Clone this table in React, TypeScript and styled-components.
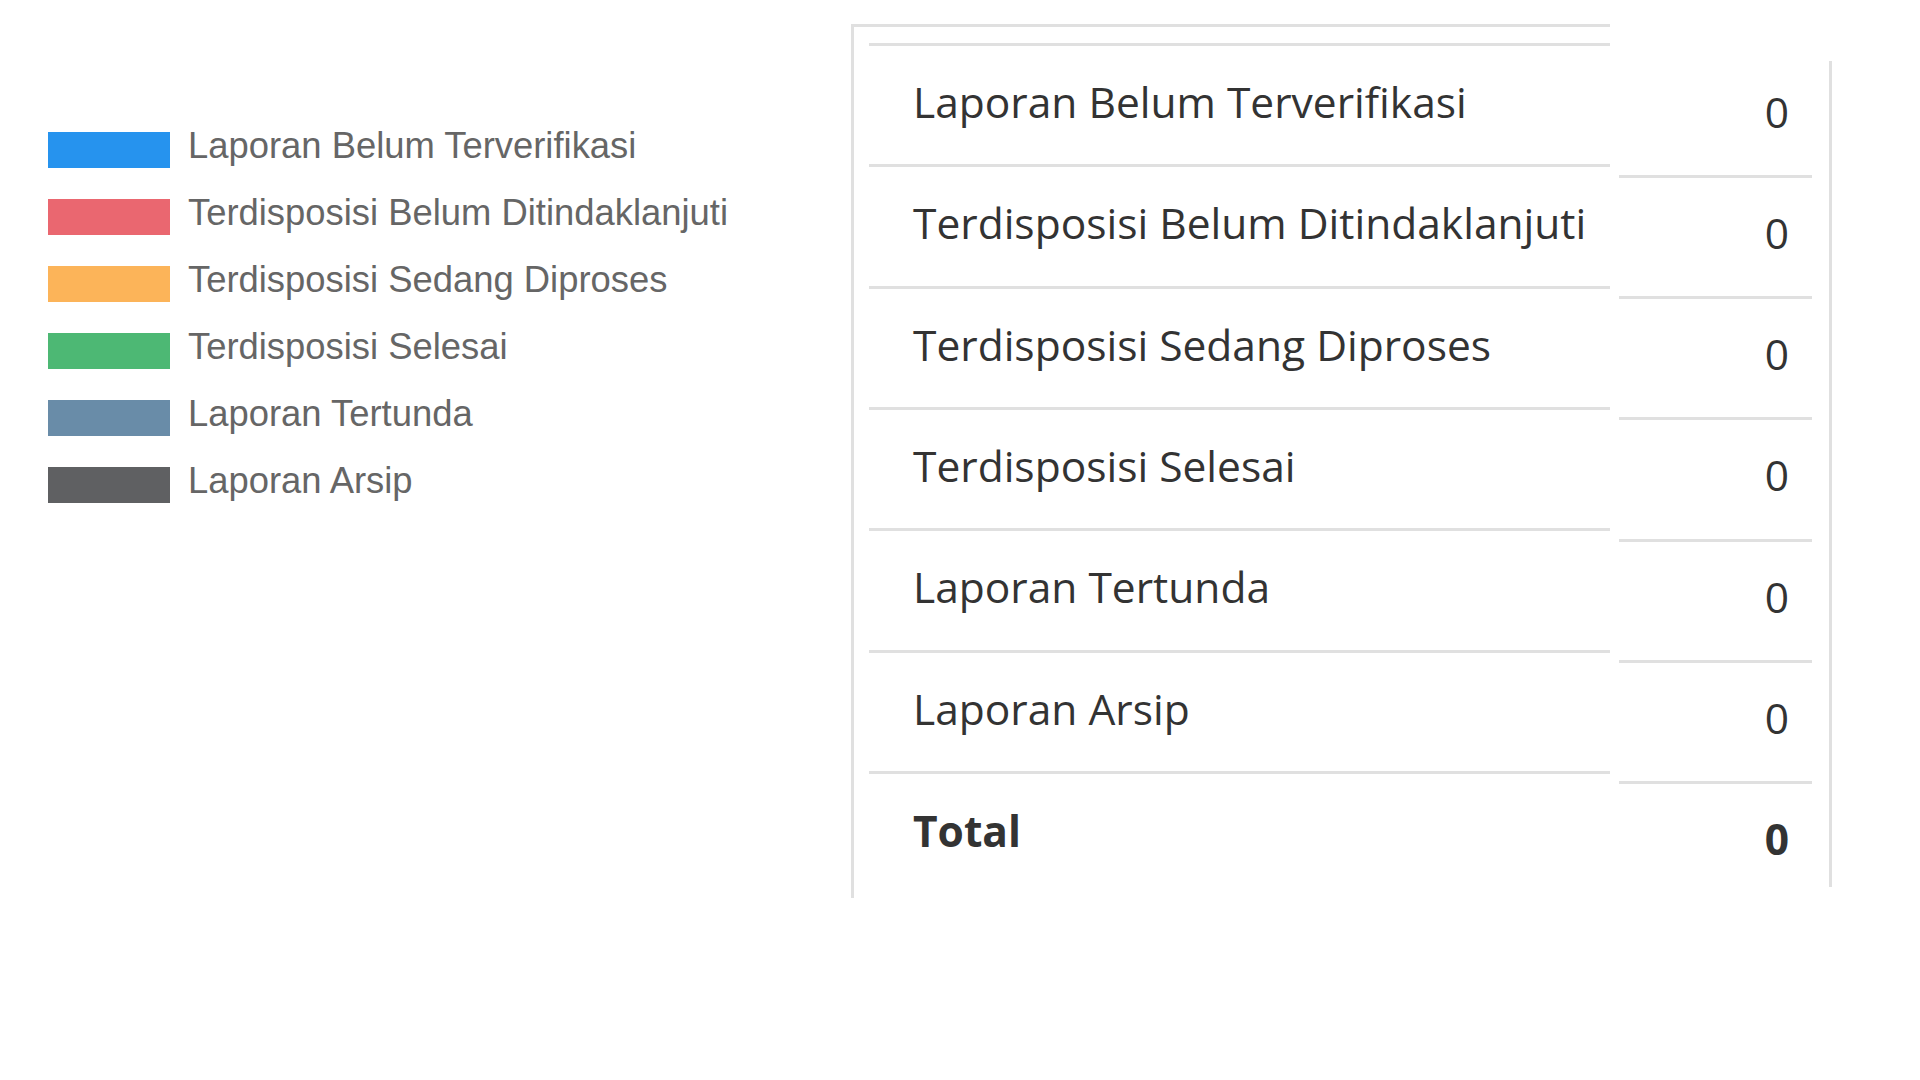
import styled, { createGlobalStyle } from "styled-components";

const GlobalStyle = createGlobalStyle`
  html, body {
    margin: 0;
    padding: 0;
    background: #ffffff;
  }
  * {
    box-sizing: border-box;
  }
`;

interface Status {
	label: string;
	color: string;
	count: number;
}

const STATUSES: Status[] = [
	{ label: "Laporan Belum Terverifikasi", color: "#2693ee", count: 0 },
	{ label: "Terdisposisi Belum Ditindaklanjuti", color: "#ea6770", count: 0 },
	{ label: "Terdisposisi Sedang Diproses", color: "#fcb459", count: 0 },
	{ label: "Terdisposisi Selesai", color: "#4db874", count: 0 },
	{ label: "Laporan Tertunda", color: "#698ca8", count: 0 },
	{ label: "Laporan Arsip", color: "#5f6062", count: 0 },
];

const LINE = "#e0e0e0";

// page: chart legend on the left, summary table on the right
const Page = styled.div`
  display: flex;
  align-items: flex-start;
  width: 1920px;
  height: 1080px;
  overflow: hidden;
`;

// legend, drawn the way chart.js draws it (scaled up)
const Legend = styled.ul`
  width: 851px;
  margin: 0;
  padding: 132px 0 0 48px;
  list-style: none;
  display: flex;
  flex-direction: column;
  gap: 31px;
`;
const LegendItem = styled.li`
  display: flex;
  align-items: center;
  gap: 18px;
  height: 36px;
`;
const Swatch = styled.span<{ $color: string }>`
  flex-shrink: 0;
  width: 122px;
  height: 36px;
  background: ${({ $color }) => $color};
`;
const LegendLabel = styled.span`
  margin-top: -8px;
  font-family: "Liberation Sans", Arial, sans-serif;
  font-size: 36.4px;
  line-height: 36px;
  color: #666666;
  white-space: nowrap;
`;

// the table is split in two blocks that do not quite line up
const Summary = styled.div`
  display: flex;
  align-items: flex-start;
  gap: 9px;
  margin-top: 24px;
  font-family: "Open Sans", "Liberation Sans", sans-serif;
  font-size: 42.5px;
  color: #333333;
`;

const LabelColumn = styled.div`
  width: 759px;
  height: 874px;
  border-left: 3px solid ${LINE};
  border-top: 3px solid ${LINE};
  padding: 16px 0 0 15px;
  display: flex;
  flex-direction: column;
`;
const LabelRow = styled.div<{ $total?: boolean }>`
  display: flex;
  align-items: center;
  height: ${({ $total }) => ($total ? "124px" : "121.33px")};
  border-top: 3px solid ${LINE};
  padding: 0 0 7px 44px;
  font-weight: ${({ $total }) => ($total ? 700 : 400)};
  white-space: nowrap;
`;

const ValueColumn = styled.div`
  margin-top: 37px;
  height: 826px;
  border-right: 3px solid ${LINE};
  padding-right: 17px;
  display: flex;
  flex-direction: column;
`;
const ValueRow = styled.div<{ $first?: boolean; $total?: boolean }>`
  width: 193px;
  height: ${({ $first, $total }) =>
		$first ? "114px" : $total ? "106px" : "121.2px"};
  border-top: ${({ $first }) => ($first ? "none" : `3px solid ${LINE}`)};
  padding: ${({ $first }) => ($first ? "21px" : "25px")} 23px 0 0;
  text-align: right;
  line-height: 60px;
  font-weight: ${({ $total }) => ($total ? 700 : 400)};
`;

const App = () => {
	const total = STATUSES.reduce((sum, s) => sum + s.count, 0);

	return (
		<Page>
			<GlobalStyle />
			<Legend>
				{STATUSES.map((s) => (
					<LegendItem key={s.label}>
						<Swatch $color={s.color} />
						<LegendLabel>{s.label}</LegendLabel>
					</LegendItem>
				))}
			</Legend>

			<Summary>
				<LabelColumn>
					{STATUSES.map((s) => (
						<LabelRow key={s.label}>{s.label}</LabelRow>
					))}
					<LabelRow $total>Total</LabelRow>
				</LabelColumn>
				<ValueColumn>
					{STATUSES.map((s, i) => (
						<ValueRow key={s.label} $first={i === 0}>
							{s.count}
						</ValueRow>
					))}
					<ValueRow $total>{total}</ValueRow>
				</ValueColumn>
			</Summary>
		</Page>
	);
};

export default App;
